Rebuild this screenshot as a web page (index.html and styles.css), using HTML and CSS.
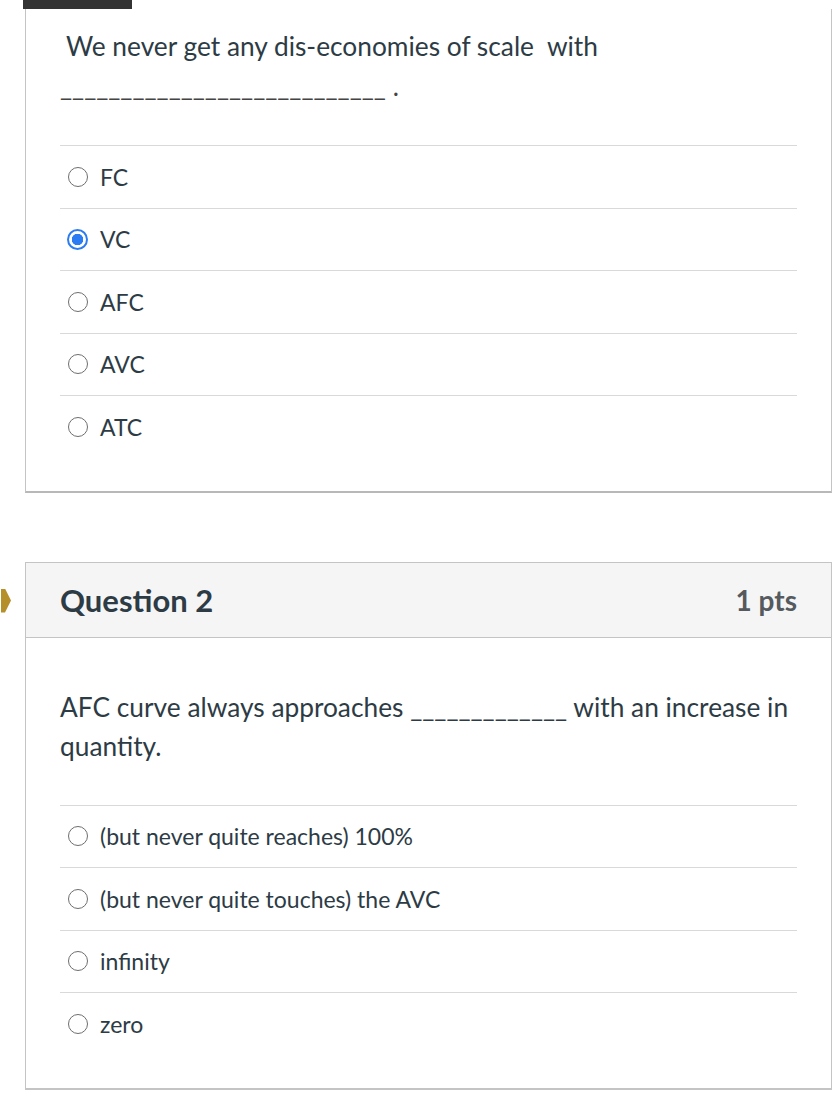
FILE: index.html
```html
<!DOCTYPE html>
<html>
<head>
<meta charset="utf-8">
<link rel="stylesheet" href="styles.css">
</head>
<body>
<div class="page">
  <div class="tab"></div>
  <section class="card card-first">
    <div class="card-body">
      <div class="qtext">
        <p class="q1-line1">We never get any dis-economies of scale&nbsp; with</p>
        <p class="q1-line2">___________________________ .</p>
      </div>
      <ul class="answers">
        <li class="answer"><span class="radio"></span><span class="label">FC</span></li>
        <li class="answer"><span class="radio checked"></span><span class="label">VC</span></li>
        <li class="answer"><span class="radio"></span><span class="label">AFC</span></li>
        <li class="answer"><span class="radio"></span><span class="label">AVC</span></li>
        <li class="answer"><span class="radio"></span><span class="label">ATC</span></li>
      </ul>
    </div>
  </section>

  <section class="card card-second">
    <span class="marker"></span>
    <header class="card-header">
      <h2 class="qtitle">Question 2</h2>
      <span class="pts">1 pts</span>
    </header>
    <div class="card-body body2">
      <div class="qtext2">
        <p>AFC curve always approaches _____________ with an increase in quantity.</p>
      </div>
      <ul class="answers">
        <li class="answer"><span class="radio"></span><span class="label">(but never quite reaches) 100%</span></li>
        <li class="answer"><span class="radio"></span><span class="label">(but never quite touches) the AVC</span></li>
        <li class="answer"><span class="radio"></span><span class="label">infinity</span></li>
        <li class="answer"><span class="radio"></span><span class="label">zero</span></li>
      </ul>
    </div>
  </section>
</div>
</body>
</html>
```

FILE: styles.css
```css
html, body {
  margin: 0;
  padding: 0;
  background: #ffffff;
}
body {
  font-family: Lato, "Open Sans", "Liberation Sans", sans-serif;
  color: #2d3b45;
}
.page {
  padding-left: 25px;
  width: 807px;
}
.tab {
  width: 109px;
  height: 9px;
  margin-left: -2px;
  background: #333333;
}
.card {
  border: 1px solid #c4c4c4;
  background: #fff;
  position: relative;
}
.card-first {
  border-top: none;
  border-bottom: 2px solid #b8b8b8;
}
.card-second {
  margin-top: 69px;
  border-bottom: 2px solid #c4c4c4;
}
.card-body {
  padding: 0 34px 33px 34px;
}
.qtext p {
  margin: 0;
  font-size: 26.3px;
  line-height: 40px;
}
.q1-line1 {
  padding-top: 17px;
  padding-left: 6px;
}
.q1-line2 {
  color: #444;
  margin-top: 0;
}
.qtext {
  padding-bottom: 39px;
}
.answers {
  list-style: none;
  margin: 0;
  padding: 0;
}
.answer {
  display: flex;
  align-items: center;
  height: 61.5px;
  border-top: 1px solid #d9d9d9;
  padding-left: 8px;
}
.radio {
  width: 20px;
  height: 20px;
  border: 1.5px solid #6e6e6e;
  border-radius: 50%;
  box-sizing: border-box;
  flex: none;
  margin-right: 12px;
  background: #fff;
}
.radio.checked {
  border: 2px solid #2b7cf2;
  background: radial-gradient(circle, #2b7cf2 0 5.5px, #fff 6px);
  width: 21px;
  height: 21px;
  margin-left: -1px;
  margin-right: 12px;
}
.label {
  font-size: 23px;
  color: #2d3b45;
}
.marker {
  position: absolute;
  left: -25px;
  top: 26px;
  width: 10px;
  height: 24px;
  background: #b58f2a;
  clip-path: polygon(0 0, 40% 0, 100% 50%, 40% 100%, 0 100%);
}
.card-header {
  display: flex;
  justify-content: space-between;
  align-items: center;
  height: 74px;
  padding: 0 34px;
  background: #f5f5f5;
  border-bottom: 1px solid #c4c4c4;
}
.qtitle {
  margin: 0;
  font-size: 31px;
  font-weight: 700;
  color: #2d3b45;
}
.pts {
  font-size: 28px;
  font-weight: 700;
  color: #555a5e;
}
.body2 {
  padding-top: 50px;
  padding-bottom: 33px;
}
.qtext2 {
  padding-bottom: 39px;
}
.qtext2 p {
  margin: 0;
  font-size: 26.3px;
  line-height: 39px;
}
```
